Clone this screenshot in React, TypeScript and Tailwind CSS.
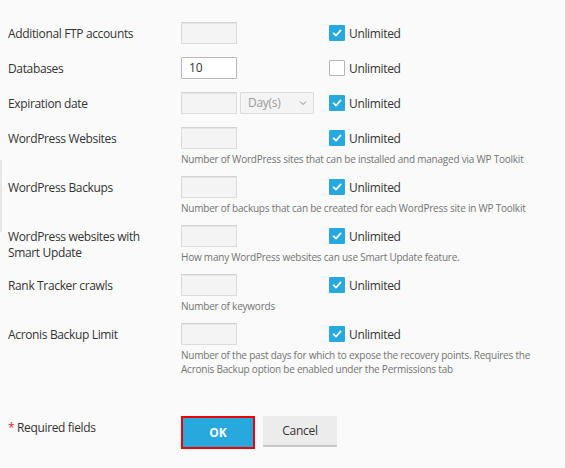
import React from "react";

type Row = {
  label: React.ReactNode;
  value?: string;
  checked: boolean;
  hint?: React.ReactNode;
  select?: boolean;
};

const rows: Row[] = [
  { label: "Additional FTP accounts", checked: true },
  { label: "Databases", value: "10", checked: false },
  { label: "Expiration date", checked: true, select: true },
  {
    label: "WordPress Websites",
    checked: true,
    hint: "Number of WordPress sites that can be installed and managed via WP Toolkit",
  },
  {
    label: "WordPress Backups",
    checked: true,
    hint: "Number of backups that can be created for each WordPress site in WP Toolkit",
  },
  {
    label: (
      <>
        WordPress websites with
        <br />
        Smart Update
      </>
    ),
    checked: true,
    hint: "How many WordPress websites can use Smart Update feature.",
  },
  { label: "Rank Tracker crawls", checked: true, hint: "Number of keywords" },
  {
    label: "Acronis Backup Limit",
    checked: true,
    hint: (
      <>
        Number of the past days for which to expose the recovery points. Requires the
        <br />
        Acronis Backup option be enabled under the Permissions tab
      </>
    ),
  },
];

function Checkbox({ checked }: { checked: boolean }) {
  if (!checked) {
    return <span className="w-4 h-4 bg-white border border-[#b5b5b5] rounded-[1px] shrink-0" />;
  }
  return (
    <span className="w-4 h-4 bg-[#28a9dd] rounded-[1px] shrink-0 flex items-center justify-center">
      <svg width="12" height="12" viewBox="0 0 12 12" fill="none">
        <path d="M2.5 6.2 L5 8.6 L9.6 3.4" stroke="white" strokeWidth="1.6" strokeLinecap="round" strokeLinejoin="round" />
      </svg>
    </span>
  );
}

function FieldRow({ row }: { row: Row }) {
  const enabled = !!row.value;
  return (
    <div className={`grid grid-cols-[173px_148px_1fr] ${row.hint ? "pb-[10px]" : "pb-[13px]"}`}>
      <div className="row-span-2 pt-[4px] leading-4 text-[12px] tracking-[-0.35px] text-[#333]">{row.label}</div>
      <div className="flex gap-[3px]">
        <div
          className={`w-14 h-[22px] border rounded-[1px] px-[7px] flex items-center text-[12px] ${
            enabled
              ? "bg-white border-[#b8b8b8] text-[#333]"
              : "bg-[#f4f4f4] border-[#dcdcdc] border-t-[#d2d2d2] shadow-[inset_0_1px_0_#e6e6e6]"
          }`}
        >
          {row.value}
        </div>
        {row.select && (
          <div className="w-[74px] h-[22px] bg-[#f4f4f4] border border-[#dcdcdc] rounded-[1px] pl-[7px] pr-[6px] flex items-center justify-between text-[12px] tracking-[-0.3px] text-[#9a9a9a]">
            <span>Day(s)</span>
            <svg width="8" height="6" viewBox="0 0 8 6" fill="none">
              <path d="M1 1.5 L4 4.5 L7 1.5" stroke="#8a8a8a" strokeWidth="1" />
            </svg>
          </div>
        )}
      </div>
      <label className="flex items-center gap-1 h-[22px] text-[12px] tracking-[-0.35px] text-[#333]">
        <Checkbox checked={row.checked} />
        <span className="pt-[2px]">Unlimited</span>
      </label>
      {row.hint && (
        <div className="col-start-2 col-span-2 mt-[3px] leading-[14px] text-[10px] tracking-[-0.22px] text-[#737373]">
          {row.hint}
        </div>
      )}
    </div>
  );
}

export default function App() {
  return (
    <div className="relative w-[565px] h-[468px] bg-[#fafafa] overflow-hidden font-['Open_Sans',sans-serif]">
      {/* panel edge on the left */}
      <div className="absolute left-0 top-[160px] w-[2px] h-[72px] bg-[#e6e6e6]" />

      <div className="pl-2 pt-[22px]">
        {rows.map((row, i) => (
          <FieldRow key={i} row={row} />
        ))}

        <div className="mt-[30px] grid grid-cols-[173px_1fr]">
          <div className="pt-[3px] text-[12px] tracking-[-0.35px] text-[#333]">
            <span className="text-[#e0262c]">*</span> Required fields
          </div>
          <div className="flex gap-2">
            <button className="w-[74px] h-[33px] bg-[#28a9dd] border-2 border-[#ee0000] text-white font-bold text-[12px]">
              OK
            </button>
            <button className="w-[74px] h-[31px] bg-[#ececec] border-b-2 border-[#c6c6c6] rounded-[1px] text-[#333] text-[12px] tracking-[-0.3px]">
              Cancel
            </button>
          </div>
        </div>
      </div>
    </div>
  );
}
